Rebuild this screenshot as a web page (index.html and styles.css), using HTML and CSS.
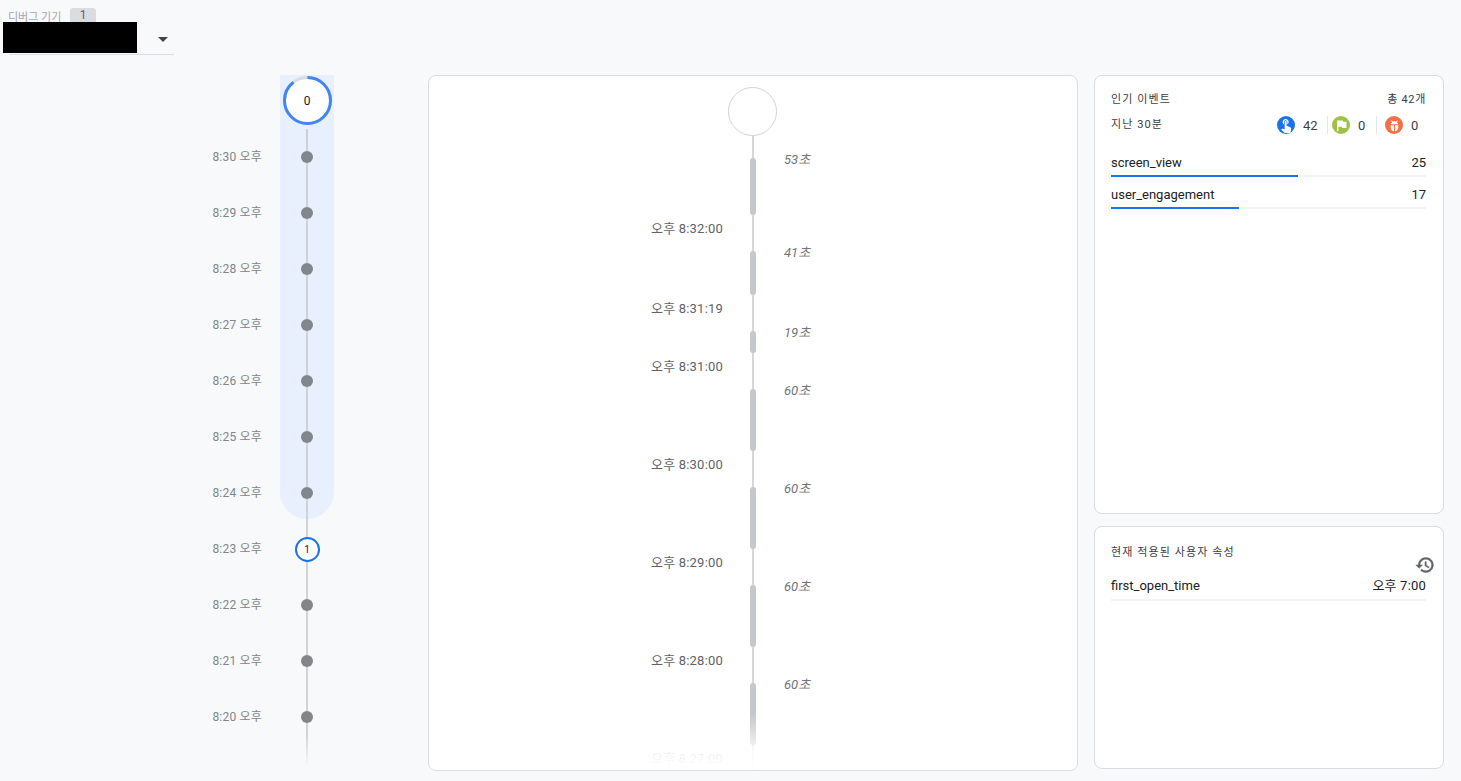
FILE: index.html
```html
<!DOCTYPE html>
<html lang="ko">
<head>
    <meta charset="UTF-8">
    <title>DebugView</title>
    <link rel="stylesheet" href="styles.css">
</head>
<body>
    <!-- Device picker -->
    <div class="device-bar">
        <div class="device-head">
            <span class="device-label">디버그 기기</span>
            <span class="device-count">1</span>
        </div>
        <div class="device-select">
            <div class="redacted"></div>
            <span class="caret"></span>
        </div>
    </div>

    <div class="main">
        <!-- Minutes stream -->
        <div class="minutes">
            <div class="minute-labels">
                <div class="minute-label">8:30 오후</div>
                <div class="minute-label">8:29 오후</div>
                <div class="minute-label">8:28 오후</div>
                <div class="minute-label">8:27 오후</div>
                <div class="minute-label">8:26 오후</div>
                <div class="minute-label">8:25 오후</div>
                <div class="minute-label">8:24 오후</div>
                <div class="minute-label">8:23 오후</div>
                <div class="minute-label">8:22 오후</div>
                <div class="minute-label">8:21 오후</div>
                <div class="minute-label">8:20 오후</div>
                <div class="minute-label">8:19 오후</div>
            </div>
            <div class="minute-track">
                <div class="capsule">
                    <div class="now-row">
                        <div class="now-ring">
                            <svg width="49" height="49" viewBox="0 0 49 49">
                                <circle cx="24.5" cy="24.5" r="23" fill="#fff" stroke="#dadce0" stroke-width="3"/>
                                <circle class="now-progress" cx="24.5" cy="24.5" r="23" fill="none" stroke="#4285f4" stroke-width="3" pathLength="100" stroke-dasharray="89.5 100"/>
                            </svg>
                            <span class="now-count">0</span>
                        </div>
                    </div>
                    <div class="node-row"><span class="dot"></span></div>
                    <div class="node-row"><span class="dot"></span></div>
                    <div class="node-row"><span class="dot"></span></div>
                    <div class="node-row"><span class="dot"></span></div>
                    <div class="node-row"><span class="dot"></span></div>
                    <div class="node-row"><span class="dot"></span></div>
                    <div class="node-row"><span class="dot"></span></div>
                </div>
                <div class="node-row"><span class="selected-node">1</span></div>
                <div class="node-row"><span class="dot"></span></div>
                <div class="node-row"><span class="dot"></span></div>
                <div class="node-row"><span class="dot"></span></div>
                <div class="node-row"><span class="dot"></span></div>
            </div>
            <div class="minutes-fade"></div>
        </div>

        <!-- Seconds stream -->
        <div class="card seconds">
            <div class="timeline">
                <div class="start-circle"></div>
                <div class="seg">
                    <div class="seg-bar" style="height: 57px"></div>
                    <div class="seg-duration">53초</div>
                    <div class="seg-time">오후 8:32:00</div>
                </div>
                <div class="seg">
                    <div class="seg-bar" style="height: 44px"></div>
                    <div class="seg-duration">41초</div>
                    <div class="seg-time">오후 8:31:19</div>
                </div>
                <div class="seg">
                    <div class="seg-bar" style="height: 22px"></div>
                    <div class="seg-duration">19초</div>
                    <div class="seg-time">오후 8:31:00</div>
                </div>
                <div class="seg">
                    <div class="seg-bar" style="height: 62px"></div>
                    <div class="seg-duration">60초</div>
                    <div class="seg-time">오후 8:30:00</div>
                </div>
                <div class="seg">
                    <div class="seg-bar" style="height: 62px"></div>
                    <div class="seg-duration">60초</div>
                    <div class="seg-time">오후 8:29:00</div>
                </div>
                <div class="seg">
                    <div class="seg-bar" style="height: 62px"></div>
                    <div class="seg-duration">60초</div>
                    <div class="seg-time">오후 8:28:00</div>
                </div>
                <div class="seg">
                    <div class="seg-bar" style="height: 62px"></div>
                    <div class="seg-duration">60초</div>
                    <div class="seg-time">오후 8:27:00</div>
                </div>
            </div>
            <div class="seconds-fade"></div>
        </div>

        <!-- Right column -->
        <div class="side">
            <div class="card top-events">
                <div class="title-row">
                    <span class="card-title">인기 이벤트</span>
                    <span class="card-title total">총 42개</span>
                </div>
                <div class="period-row">
                    <span class="card-title">지난 30분</span>
                    <div class="counters">
                        <span class="counter-icon icon-blue">
                            <svg width="16" height="16" viewBox="0 0 24 24" fill="#fff"><path d="M9 11.24V7.5C9 6.12 10.12 5 11.5 5S14 6.12 14 7.5v3.74c1.21-.81 2-2.18 2-3.74C16 5.01 13.99 3 11.5 3S7 5.01 7 7.5c0 1.56.79 2.93 2 3.74zm9.84 4.63l-4.54-2.26c-.17-.07-.35-.11-.54-.11H13v-6c0-.83-.67-1.5-1.5-1.5S10 6.67 10 7.5v10.74l-3.43-.72c-.08-.01-.15-.03-.24-.03-.31 0-.59.13-.79.33l-.79.8 4.94 4.94c.27.27.65.44 1.06.44h6.79c.75 0 1.33-.55 1.44-1.28l.75-5.27c.01-.07.02-.14.02-.2 0-.62-.38-1.16-.91-1.38z"/></svg>
                        </span>
                        <span class="counter-num num-first">42</span>
                        <span class="counter-sep sep-first"></span>
                        <span class="counter-icon icon-green">
                            <svg width="15" height="15" viewBox="0 0 24 24" fill="#fff"><path d="M14.4 6L14 4H5v17h2v-7h5.6l.4 2h7V6z"/></svg>
                        </span>
                        <span class="counter-num num-second">0</span>
                        <span class="counter-sep sep-second"></span>
                        <span class="counter-icon icon-orange">
                            <svg width="15" height="15" viewBox="0 0 24 24" fill="#fff"><path d="M7.5 3.500L6.300 4.700l2 2C7 7.600 6.200 8.800 6 10h12c-.2-1.200-1-2.400-2.300-3.300l2-2-1.200-1.200-2.300 2.300c-1.400-.6-3-.6-4.400 0zM6 11.500V16c0 3 2.400 5 5.200 5v-9.500zm6.800 0V21c2.800 0 5.200-2 5.200-5v-4.500z"/></svg>
                        </span>
                        <span class="counter-num">0</span>
                    </div>
                </div>
                <div class="event-row">
                    <div class="event-text"><span>screen_view</span><span>25</span></div>
                    <div class="event-track"><div class="event-fill" style="width: 59.5%"></div></div>
                </div>
                <div class="event-row">
                    <div class="event-text"><span>user_engagement</span><span>17</span></div>
                    <div class="event-track"><div class="event-fill" style="width: 40.5%"></div></div>
                </div>
            </div>
            <div class="card user-props">
                <div class="card-title">현재 적용된 사용자 속성</div>
                <svg class="history-icon" width="20" height="20" viewBox="0 0 24 24" fill="#5f6368" stroke="#5f6368" stroke-width="0.6"><path d="M13 3c-4.970 0-9 4.030-9 9H1l3.890 3.890.07.14L9 12H6c0-3.870 3.130-7 7-7s7 3.130 7 7-3.130 7-7 7c-1.930 0-3.680-.79-4.940-2.060l-1.420 1.420C8.270 19.990 10.510 21 13 21c4.970 0 9-4.030 9-9s-4.030-9-9-9zm-1 5v5l4.280 2.540.72-1.210-3.500-2.080V8H12z"/></svg>
                <div class="prop-row"><span>first_open_time</span><span class="prop-value">오후 7:00</span></div>
            </div>
        </div>
    </div>
</body>
</html>
```

FILE: styles.css
```css
* { box-sizing: border-box; margin: 0; padding: 0; }
body { height: 781px; overflow: hidden; background: #f8f9fa; color: #202124; font-family: Roboto, "Noto Sans CJK KR", sans-serif; font-size: 13px; }

/* device picker */
.device-bar { height: 75px; padding: 8px 0 0 8px; }
.device-head { display: flex; align-items: flex-start; height: 14px; }
.device-label { width: 62px; padding-top: 3px; font-size: 11px; line-height: 14px; color: #a5a8ac; white-space: nowrap; }
.device-count { width: 26px; height: 14px; background: #dadce0; border-radius: 3px 3px 0 0; text-align: center; font-size: 12px; line-height: 14px; color: #5f6368; }
.device-select { position: relative; width: 165px; height: 33px; margin-left: 1px; border-bottom: 1px solid #dadce0; }
.redacted { position: absolute; left: -6px; top: 0; width: 134px; height: 31px; background: #000; }
.caret { position: absolute; right: 6px; top: 15px; border-left: 5.5px solid transparent; border-right: 5.5px solid transparent; border-top: 5px solid #444; }

.main { display: flex; align-items: flex-start; }

/* minutes stream */
.minutes { position: relative; display: flex; width: 428px; height: 706px; overflow: hidden; flex-shrink: 0; }
.minute-labels { width: 262px; margin-right: 18px; padding-top: 54px; flex-shrink: 0; }
.minute-label { height: 56px; line-height: 56px; text-align: right; font-size: 12px; letter-spacing: 0.2px; color: #80868b; white-space: nowrap; }
.minute-track { width: 54px; background: linear-gradient(#d2d3d5, #d2d3d5) center / 2px 100% no-repeat; }
.capsule { height: 444px; margin-bottom: 2px; border-radius: 0 0 27px 27px; background: linear-gradient(#cdd1d8, #cdd1d8) center / 2px 100% no-repeat, #e8f0fe; }
.now-row { height: 54px; background: #e8f0fe; display: flex; justify-content: center; align-items: flex-start; padding-top: 1px; }
.now-ring { position: relative; width: 49px; height: 49px; }
.now-ring svg { display: block; }
.now-progress { transform: rotate(-90deg); transform-origin: 24.5px 24.5px; }
.now-count { position: absolute; inset: 0; display: flex; align-items: center; justify-content: center; font-size: 12px; color: #202124; }
.node-row { height: 56px; display: flex; align-items: center; justify-content: center; }
.dot { width: 12px; height: 12px; border-radius: 50%; background: #80868b; }
.selected-node { width: 25px; height: 25px; border: 2px solid #1a73e8; border-radius: 50%; background: #fff; text-align: center; font-size: 10px; line-height: 21px; color: #202124; }
.minutes-fade { position: absolute; left: 0; right: 0; bottom: 0; height: 46px; background: linear-gradient(rgba(248, 249, 250, 0), #f8f9fa 68%); }

/* cards */
.card { background: #fff; border: 1px solid #dadce0; border-radius: 8px; }
.card-title { font-size: 11px; line-height: 16px; letter-spacing: 1.1px; color: #3c4043; white-space: nowrap; }
.total { letter-spacing: 0.7px; }

/* seconds stream */
.seconds { position: relative; width: 650px; height: 696px; flex-shrink: 0; overflow: hidden; }
.timeline { height: 100%; padding-top: 11px; background: linear-gradient(#d6d7d9, #d6d7d9) 323px 40px / 2px 100% no-repeat; }
.start-circle { width: 49px; height: 49px; margin: 0 0 22px 299px; border: 1px solid #d2d3d5; border-radius: 50%; background: #fff; }
.seg { display: grid; grid-template-columns: 321px 6px 1fr; }
.seg-bar { grid-column: 2; grid-row: 1; background: #c4c7cb; border-radius: 3px; }
.seg-duration { grid-column: 3; grid-row: 1; margin: -6px 0 0 28px; font-size: 13px; line-height: 16px; font-style: italic; color: #70757a; }
.seg-time { grid-column: 1; grid-row: 2; margin: 6px 0 14px; padding-right: 27px; text-align: right; font-size: 13px; line-height: 16px; letter-spacing: 0.2px; color: #5f6368; white-space: nowrap; }
.seconds-fade { position: absolute; left: 0; right: 0; bottom: 0; height: 56px; background: linear-gradient(rgba(255, 255, 255, 0), rgba(255, 255, 255, 0.9) 70%, #fff); }

/* right column */
.side { width: 350px; margin-left: 16px; display: flex; flex-direction: column; gap: 12px; flex-shrink: 0; }
.top-events { height: 439px; padding: 16px 17px 0 16px; }
.title-row { display: flex; justify-content: space-between; }
.period-row { display: flex; justify-content: space-between; align-items: center; height: 18px; margin: 8px 0 21px; }
.counters { display: flex; align-items: center; padding-right: 8px; }
.counter-icon { width: 18px; height: 18px; border-radius: 50%; display: flex; align-items: center; justify-content: center; }
.icon-blue { background: #1a73e8; }
.icon-green { background: #9fc146; }
.icon-orange { background: #f07048; }
.counter-num { padding-left: 8px; font-size: 13px; color: #3c4043; box-sizing: content-box; width: 7px; }
.num-first { width: 24px; }
.num-second { width: 18px; }
.counter-sep { width: 1px; height: 18px; background: #e4e5e7; }
.sep-first { margin-right: 4px; }
.sep-second { margin-right: 8px; }
.event-row { margin-bottom: 10px; }
.event-text { display: flex; justify-content: space-between; height: 16px; line-height: 16px; margin-bottom: 4px; }
.event-track { height: 2px; background: #f1f3f4; }
.event-fill { height: 2px; background: #1a73e8; }
.user-props { height: 243px; padding: 18px 17px 0 16px; display: flex; flex-direction: column; }
.history-icon { align-self: flex-end; margin: -6px -9px 0 0; flex-shrink: 0; }
.prop-row { display: flex; justify-content: space-between; height: 23px; line-height: 16px; margin-top: 3px; border-bottom: 2px solid #f1f3f4; flex-shrink: 0; }
.prop-value { letter-spacing: 0.2px; }
```
